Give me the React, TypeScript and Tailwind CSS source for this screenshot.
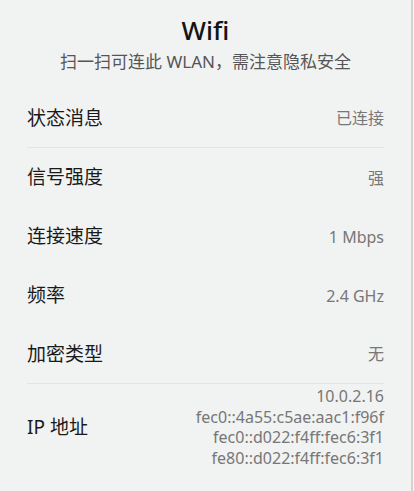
const ROWS = [
  { label: "状态消息", value: "已连接", divider: true },
  { label: "信号强度", value: "强" },
  { label: "连接速度", value: "1 Mbps" },
  { label: "频率", value: "2.4 GHz" },
  { label: "加密类型", value: "无", divider: true },
]

const IPS = [
  "10.0.2.16",
  "fec0::4a55:c5ae:aac1:f96f",
  "fec0::d022:f4ff:fec6:3f1",
  "fe80::d022:f4ff:fec6:3f1",
]

export default function App() {
  return (
    <div
      className="flex h-[491px] w-[414px] bg-[#f1f2f2] overflow-hidden"
      style={{ fontFamily: '"Noto Sans", "Noto Sans CJK SC", sans-serif' }}
    >
      <div className="flex-1 px-[27px]">
        {/* Header */}
        <div className="flex h-[89px] flex-col items-center">
          <h1 className="mt-[12px] text-[26px] leading-[36px] font-medium text-[#141414]">Wifi</h1>
          <p className="mt-[3px] text-[17px] leading-[22px] text-[#555555]">
            扫一扫可连此 WLAN，需注意隐私安全
          </p>
        </div>

        {/* Rows */}
        {ROWS.map((row) => (
          <div
            key={row.label}
            className={`flex h-[59px] items-center justify-between ${
              row.divider ? "border-b border-[#e3e4e4]" : ""
            }`}
          >
            <span className="text-[19px] text-[#1a1a1a]">{row.label}</span>
            <span className="text-[16px] text-[#777777]">{row.value}</span>
          </div>
        ))}

        {/* IP */}
        <div className="flex items-center justify-between pt-[2px]">
          <span className="text-[19px] text-[#1a1a1a]">IP 地址</span>
          <div className="flex flex-col items-end text-[16px] leading-[20.7px] text-[#777777]">
            {IPS.map((ip) => (
              <span key={ip}>{ip}</span>
            ))}
          </div>
        </div>
      </div>
      <div className="w-[2px] bg-[#d3d3d3]" />
      <div className="w-px bg-[#f7f7f7]" />
    </div>
  )
}
